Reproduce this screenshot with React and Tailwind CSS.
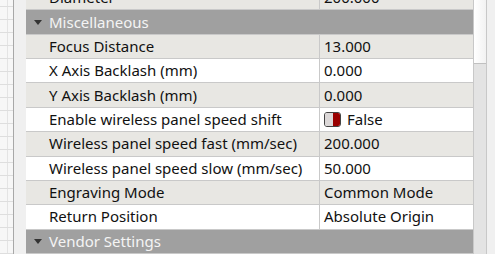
const rows = [
  { label: "Focus Distance", value: "13.000" },
  { label: "X Axis Backlash (mm)", value: "0.000" },
  { label: "Y Axis Backlash (mm)", value: "0.000" },
  { label: "Enable wireless panel speed shift", value: "False", toggle: true },
  { label: "Wireless panel speed fast (mm/sec)", value: "200.000" },
  { label: "Wireless panel speed slow (mm/sec)", value: "50.000" },
  { label: "Engraving Mode", value: "Common Mode" },
  { label: "Return Position", value: "Absolute Origin" },
];

function Row({ label, value, toggle, shaded }) {
  return (
    <div className={`flex h-[25px] border-b border-[#c9c9c9] ${shaded ? "bg-[#e8e7e3]" : "bg-white"}`}>
      <div className="w-[294px] shrink-0 border-r border-[#c9c9c9] pl-[23px] flex items-center whitespace-nowrap overflow-hidden">
        {label}
      </div>
      <div className="flex-1 pl-[4px] flex items-center gap-[6px] whitespace-nowrap">
        {toggle && (
          <span className="flex w-[17px] h-[15px] rounded-[3px] border border-[#444] overflow-hidden">
            <span className="w-1/2 bg-[#dcd8d8]" />
            <span className="w-1/2 bg-[#9a0000]" />
          </span>
        )}
        {value}
      </div>
    </div>
  );
}

function Category({ title }) {
  return (
    <div className="flex h-[25px] items-center bg-[#a0a0a0] border-b border-[#c9c9c9] text-[#f4f4f4]">
      <span className="w-[23px] flex justify-center">
        <svg width="8" height="5" viewBox="0 0 8 5">
          <path d="M0 0h8L4 5z" fill="#333" />
        </svg>
      </span>
      {title}
    </div>
  );
}

export default function App() {
  return (
    <div className="w-[495px] h-[254px] overflow-hidden flex bg-[#f0f0f0] text-[15px] text-[#111] font-['Noto_Sans','Open_Sans',sans-serif]">
      <div className="w-[14px] shrink-0 border-r border-[#a8a8a8] bg-[#f7f7f7] bg-[linear-gradient(#dedede_1px,transparent_1px),linear-gradient(90deg,#e4e4e4_1px,transparent_1px)] bg-[size:13px_13px] bg-[position:7px_6px]" />
      <div className="w-[12px] shrink-0 bg-[#f0f0f0]" />
      <div className="w-[447px] shrink-0 flex flex-col -mt-[14px] leading-none">
        <Row label="Diameter" value="200.000" shaded />
        <Category title="Miscellaneous" />
        {rows.map((r, i) => (
          <Row key={r.label} {...r} shaded={i % 2 === 0} />
        ))}
        <Category title="Vendor Settings" />
      </div>
      <div className="w-[14px] shrink-0 flex flex-col border-l border-[#c8c8c8] border-r bg-[#e3e3e3]">
        <div className="h-[64px] bg-[linear-gradient(90deg,#ffffff,#f2f2f2)] border-b border-[#c0c0c0]" />
      </div>
      <div className="flex-1 bg-[#f0f0f0]" />
    </div>
  );
}
